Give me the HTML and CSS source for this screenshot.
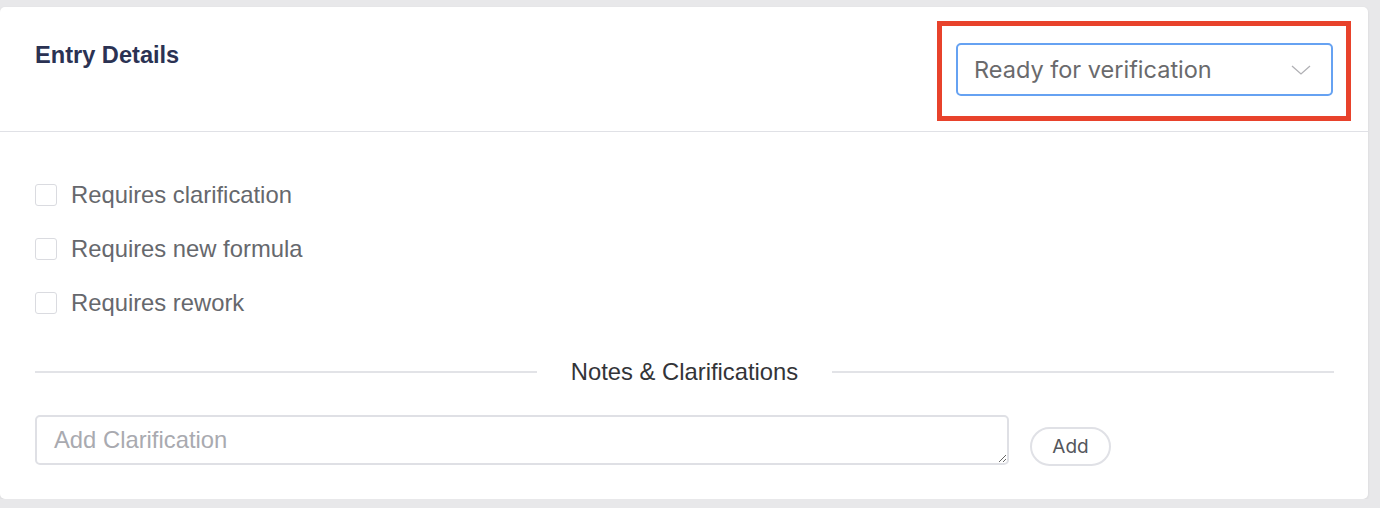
FILE: index.html
```html
<!DOCTYPE html>
<html lang="en">
<head>
<meta charset="utf-8">
<title>Entry Details</title>
<link rel="stylesheet" href="styles.css">
</head>
<body>
<section class="card">
  <header class="card-header">
    <h2 class="title">Entry Details</h2>
    <div class="select-wrap">
      <div class="select">
        <span class="select-value">Ready for verification</span>
        <svg class="chevron" width="20" height="10" viewBox="0 0 20 10"><path d="M1 1 L10 9 L19 1" fill="none" stroke="#b0b0b4" stroke-width="1.3"/></svg>
      </div>
      <div class="highlight"></div>
    </div>
  </header>
  <div class="card-body">
    <div class="checks">
      <label class="check"><span class="box"></span><span>Requires clarification</span></label>
      <label class="check"><span class="box"></span><span>Requires new formula</span></label>
      <label class="check"><span class="box"></span><span>Requires rework</span></label>
    </div>
    <div class="divider">
      <span class="rule"></span>
      <span class="divider-text">Notes &amp; Clarifications</span>
      <span class="rule"></span>
    </div>
    <div class="note-row">
      <textarea class="note" placeholder="Add Clarification"></textarea>
      <button class="add-btn" type="button">Add</button>
    </div>
  </div>
</section>
</body>
</html>
```
FILE: styles.css
```css
html, body {
  margin: 0;
  padding: 0;
  background: #e8e8ea;
}
body {
  font-family: "Liberation Sans", Arial, sans-serif;
  padding-top: 7px;
}
.card {
  width: 1368px;
  background: #ffffff;
  border-radius: 5px;
  box-shadow: 0 1px 3px rgba(0, 0, 0, 0.08);
}
.card-header {
  display: flex;
  justify-content: space-between;
  align-items: flex-start;
  height: 125px;
  box-sizing: border-box;
  padding: 35px 35px 0 35px;
  border-bottom: 1px solid #e0e1e6;
}
.title {
  margin: 0;
  font-size: 23.6px;
  line-height: 26px;
  font-weight: bold;
  color: #2b3253;
}
.select-wrap {
  position: relative;
  margin-top: 1px;
}
.select {
  display: flex;
  align-items: center;
  justify-content: space-between;
  width: 377px;
  height: 53px;
  box-sizing: border-box;
  padding: 0 20px 0 16px;
  border: 2px solid #66a2f2;
  border-radius: 5px;
  font-family: Inter, "Liberation Sans", sans-serif;
  font-size: 23.5px;
  color: #6a6a6c;
}
.chevron {
  display: block;
}
.highlight {
  position: absolute;
  top: -22px;
  left: -19px;
  right: -18px;
  bottom: -25px;
  border: 5px solid #e8422b;
  pointer-events: none;
}
.card-body {
  padding: 48px 34px 34px 35px;
}
.checks {
  display: flex;
  flex-direction: column;
  gap: 24px;
}
.check {
  display: flex;
  align-items: center;
  gap: 14px;
  height: 30px;
  font-size: 23.8px;
  line-height: 30px;
  color: #66686d;
}
.box {
  width: 22px;
  height: 22px;
  box-sizing: border-box;
  border: 1.5px solid #dadbe0;
  border-radius: 3px;
  background: #fff;
}
.divider {
  display: flex;
  align-items: center;
  height: 28px;
  margin-top: 40px;
}
.rule {
  flex: 1;
  height: 2px;
  background: #e2e3e7;
}
.divider-text {
  margin: 0 34px;
  font-size: 23.8px;
  line-height: 28px;
  color: #333438;
}
.note-row {
  display: flex;
  align-items: flex-end;
  gap: 21px;
  margin-top: 29px;
}
.note {
  width: 974px;
  height: 50px;
  box-sizing: border-box;
  padding: 10px 17px;
  border: 2px solid #dfe0e5;
  border-radius: 5px;
  font-family: "Liberation Sans", Arial, sans-serif;
  font-size: 23.8px;
  line-height: 26px;
  color: #333;
  resize: both;
  outline: none;
  margin: 0;
  display: block;
}
.note::placeholder {
  color: #a9aab0;
}
.add-btn {
  width: 81px;
  height: 39px;
  margin-bottom: -1px;
  box-sizing: border-box;
  border: 2px solid #e0e1e6;
  border-radius: 20px;
  background: #fff;
  font-family: Inter, "Liberation Sans", sans-serif;
  font-size: 19px;
  color: #55575c;
  padding: 0;
}
```
